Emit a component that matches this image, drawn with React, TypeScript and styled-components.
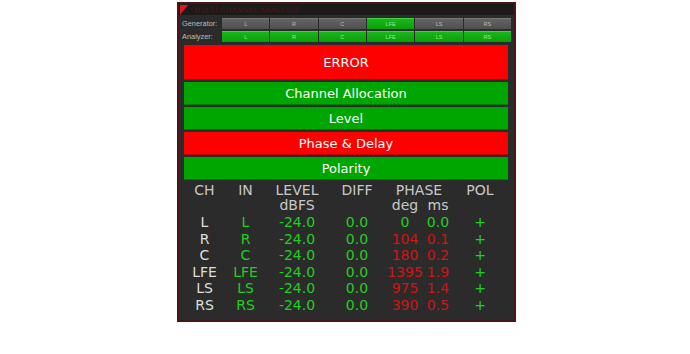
import { Fragment } from 'react';
import styled, { createGlobalStyle } from 'styled-components';

const GlobalStyle = createGlobalStyle`
  html, body { margin: 0; padding: 0; background: #ffffff; }
  body { font-family: "DejaVu Sans", "Liberation Sans", sans-serif; }
`;

const Panel = styled.div`
  box-sizing: border-box;
  margin: 2px 0 0 177px;
  width: 339px;
  height: 320px;
  border: 2px solid #4a1515;
  background: #2b2b2b;
  display: flex;
  flex-direction: column;
`;

const TitleBar = styled.div`
  height: 11px;
  background: #1b1b1b;
  display: flex;
  align-items: center;
  gap: 6px;
  padding-left: 1px;
  font-family: "Liberation Sans", sans-serif;
  font-size: 7px;
  letter-spacing: 0.6px;
  color: #5e1010;
  white-space: nowrap;
  overflow: hidden;
`;

const ControlGrid = styled.div`
  margin-top: 3px;
  padding: 0 3px;
  display: grid;
  grid-template-columns: 39px repeat(6, 1fr);
  grid-auto-rows: 11px;
  column-gap: 1px;
  row-gap: 2px;
`;

const RowLabel = styled.div`
  font-family: "Liberation Sans", sans-serif;
  font-size: 7.4px;
  line-height: 11px;
  color: #bdbdbd;
`;

const ChanButton = styled.div<{ $on: boolean }>`
  display: flex;
  align-items: center;
  justify-content: center;
  font-family: "Liberation Sans", sans-serif;
  font-size: 5.5px;
  color: ${({ $on }) => ($on ? '#9fe59f' : '#bbbbbb')};
  background: ${({ $on }) => ($on ? 'linear-gradient(#18b818, #0a9e0a)' : 'linear-gradient(#646464, #4f4f4f)')};
  border-top: 1px solid ${({ $on }) => ($on ? '#3ed23e' : '#777')};
  box-sizing: border-box;
`;

const Blocks = styled.div`
  margin-top: 3px;
  padding: 0 6px 0 5px;
  display: flex;
  flex-direction: column;
  gap: 2px;
`;

const StatusBlock = styled.div<{ $ok: boolean; $tall?: boolean }>`
  height: ${({ $tall }) => ($tall ? '35px' : '23px')};
  background: ${({ $ok }) => ($ok ? '#00a600' : '#ff0000')};
  display: flex;
  align-items: center;
  justify-content: center;
  font-size: 13px;
  color: #ffffff;
  box-shadow: inset 0 -1px 0 rgba(0, 0, 0, 0.25);
`;

const Table = styled.div`
  margin-top: 2px;
  padding: 0 6px 0 5px;
  display: grid;
  grid-template-columns: 41px 41px 62px 58px 38px 28px 56px;
  font-size: 14px;
  text-align: center;
`;

const Head = styled.div<{ $span?: number }>`
  grid-column: span ${({ $span }) => $span ?? 1};
  line-height: 16px;
  color: #c8c8c8;
`;

const SubHead = styled.div<{ $span?: number }>`
  grid-column: span ${({ $span }) => $span ?? 1};
  line-height: 14px;
  margin-bottom: 2px;
  color: #c8c8c8;
`;

const Cell = styled.div<{ $tone: 'white' | 'green' | 'red' }>`
  line-height: 16.5px;
  white-space: nowrap;
  color: ${({ $tone }) => ($tone === 'white' ? '#dedede' : $tone === 'green' ? '#1fd11f' : '#d11414')};
`;

const channels = ['L', 'R', 'C', 'LFE', 'LS', 'RS'];
const generatorOn = ['LFE'];

const rows = [
  { ch: 'L', deg: '0', ms: '0.0' },
  { ch: 'R', deg: '104', ms: '0.1' },
  { ch: 'C', deg: '180', ms: '0.2' },
  { ch: 'LFE', deg: '1395', ms: '1.9' },
  { ch: 'LS', deg: '975', ms: '1.4' },
  { ch: 'RS', deg: '390', ms: '0.5' },
];

export default function App() {
  return (
    <>
      <GlobalStyle />
      <Panel>
        <TitleBar>
          <svg width="8" height="10" viewBox="0 0 8 10">
            <polygon points="0,0 8,0 0,10" fill="#e01818" />
          </svg>
          <span>MULTI-CHANNEL ANALYSIS</span>
        </TitleBar>

        <ControlGrid>
          <RowLabel>Generator:</RowLabel>
          {channels.map((c) => (
            <ChanButton key={'g' + c} $on={generatorOn.includes(c)}>{c}</ChanButton>
          ))}
          <RowLabel>Analyzer:</RowLabel>
          {channels.map((c) => (
            <ChanButton key={'a' + c} $on>{c}</ChanButton>
          ))}
        </ControlGrid>

        <Blocks>
          <StatusBlock $ok={false} $tall>ERROR</StatusBlock>
          <StatusBlock $ok>Channel Allocation</StatusBlock>
          <StatusBlock $ok>Level</StatusBlock>
          <StatusBlock $ok={false}>Phase &amp; Delay</StatusBlock>
          <StatusBlock $ok>Polarity</StatusBlock>
        </Blocks>

        <Table>
          <Head>CH</Head>
          <Head>IN</Head>
          <Head>LEVEL</Head>
          <Head>DIFF</Head>
          <Head $span={2}>PHASE</Head>
          <Head>POL</Head>

          <SubHead $span={2} />
          <SubHead>dBFS</SubHead>
          <SubHead />
          <SubHead>deg</SubHead>
          <SubHead>ms</SubHead>
          <SubHead />

          {rows.map((r) => (
            <Fragment key={r.ch}>
              <Cell $tone="white">{r.ch}</Cell>
              <Cell $tone="green">{r.ch}</Cell>
              <Cell $tone="green">-24.0</Cell>
              <Cell $tone="green">0.0</Cell>
              <Cell $tone={r.deg === '0' ? 'green' : 'red'}>{r.deg}</Cell>
              <Cell $tone={r.ms === '0.0' ? 'green' : 'red'}>{r.ms}</Cell>
              <Cell $tone="green">+</Cell>
            </Fragment>
          ))}
        </Table>
      </Panel>
    </>
  );
}
